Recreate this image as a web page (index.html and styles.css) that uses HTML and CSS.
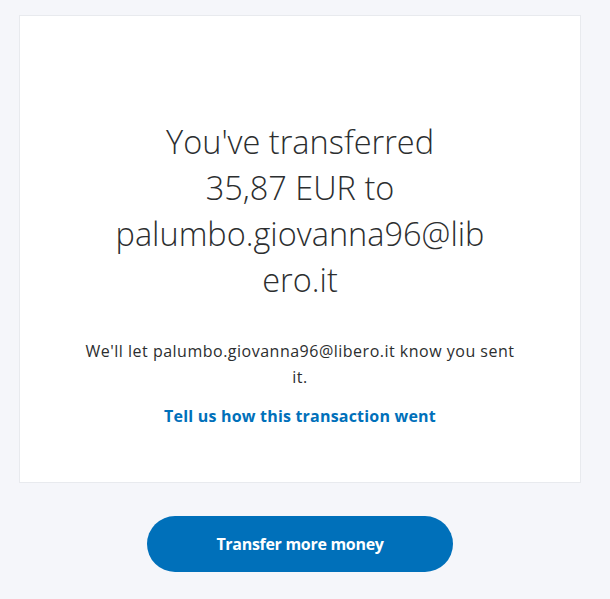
FILE: index.html
```html
<!DOCTYPE html>
<html>
<head>
<meta charset="utf-8">
<link rel="stylesheet" href="styles.css">
</head>
<body>
<main class="page">
  <section class="card">
    <h1 class="title">You've transferred 35,87&nbsp;EUR to palumbo.giovanna96@libero.it</h1>
    <p class="note">We'll let palumbo.giovanna96@libero.it know you sent it.</p>
    <a class="feedback" href="#">Tell us how this transaction went</a>
  </section>
  <div class="actions">
    <a class="btn" href="#">Transfer more money</a>
  </div>
</main>
</body>
</html>
```
FILE: styles.css
```css
html, body {
  margin: 0;
  padding: 0;
  background: #f5f6fa;
}
body {
  font-family: "Open Sans", "Noto Sans", sans-serif;
  color: #2c2e2f;
}
.page {
  padding: 15px 29px 0 19px;
  display: flex;
  flex-direction: column;
  align-items: stretch;
}
.card {
  background: #fff;
  border: 1px solid #e8eaee;
  padding: 103px 40px 0;
  display: flex;
  flex-direction: column;
  align-items: center;
  text-align: center;
  box-sizing: border-box;
  height: 468px;
}
.title {
  margin: 0;
  width: 380px;
  font-size: 32.5px;
  font-weight: 300;
  line-height: 46px;
  overflow-wrap: anywhere;
  color: #2c2e2f;
}
.note {
  margin: 35px 0 0;
  width: 446px;
  font-size: 16px;
  letter-spacing: 0.5px;
  line-height: 26px;
}
.feedback {
  margin-top: 15px;
  font-size: 16px;
  font-weight: 700;
  letter-spacing: 0.2px;
  line-height: 22px;
  color: #0070ba;
  text-decoration: none;
}
.actions {
  display: flex;
  justify-content: center;
  padding-top: 33px;
}
.btn {
  width: 306px;
  height: 56px;
  border-radius: 28px;
  background: #0070ba;
  color: #fff;
  font-size: 16px;
  font-weight: 700;
  letter-spacing: -0.3px;
  display: flex;
  align-items: center;
  justify-content: center;
  text-decoration: none;
}
```
